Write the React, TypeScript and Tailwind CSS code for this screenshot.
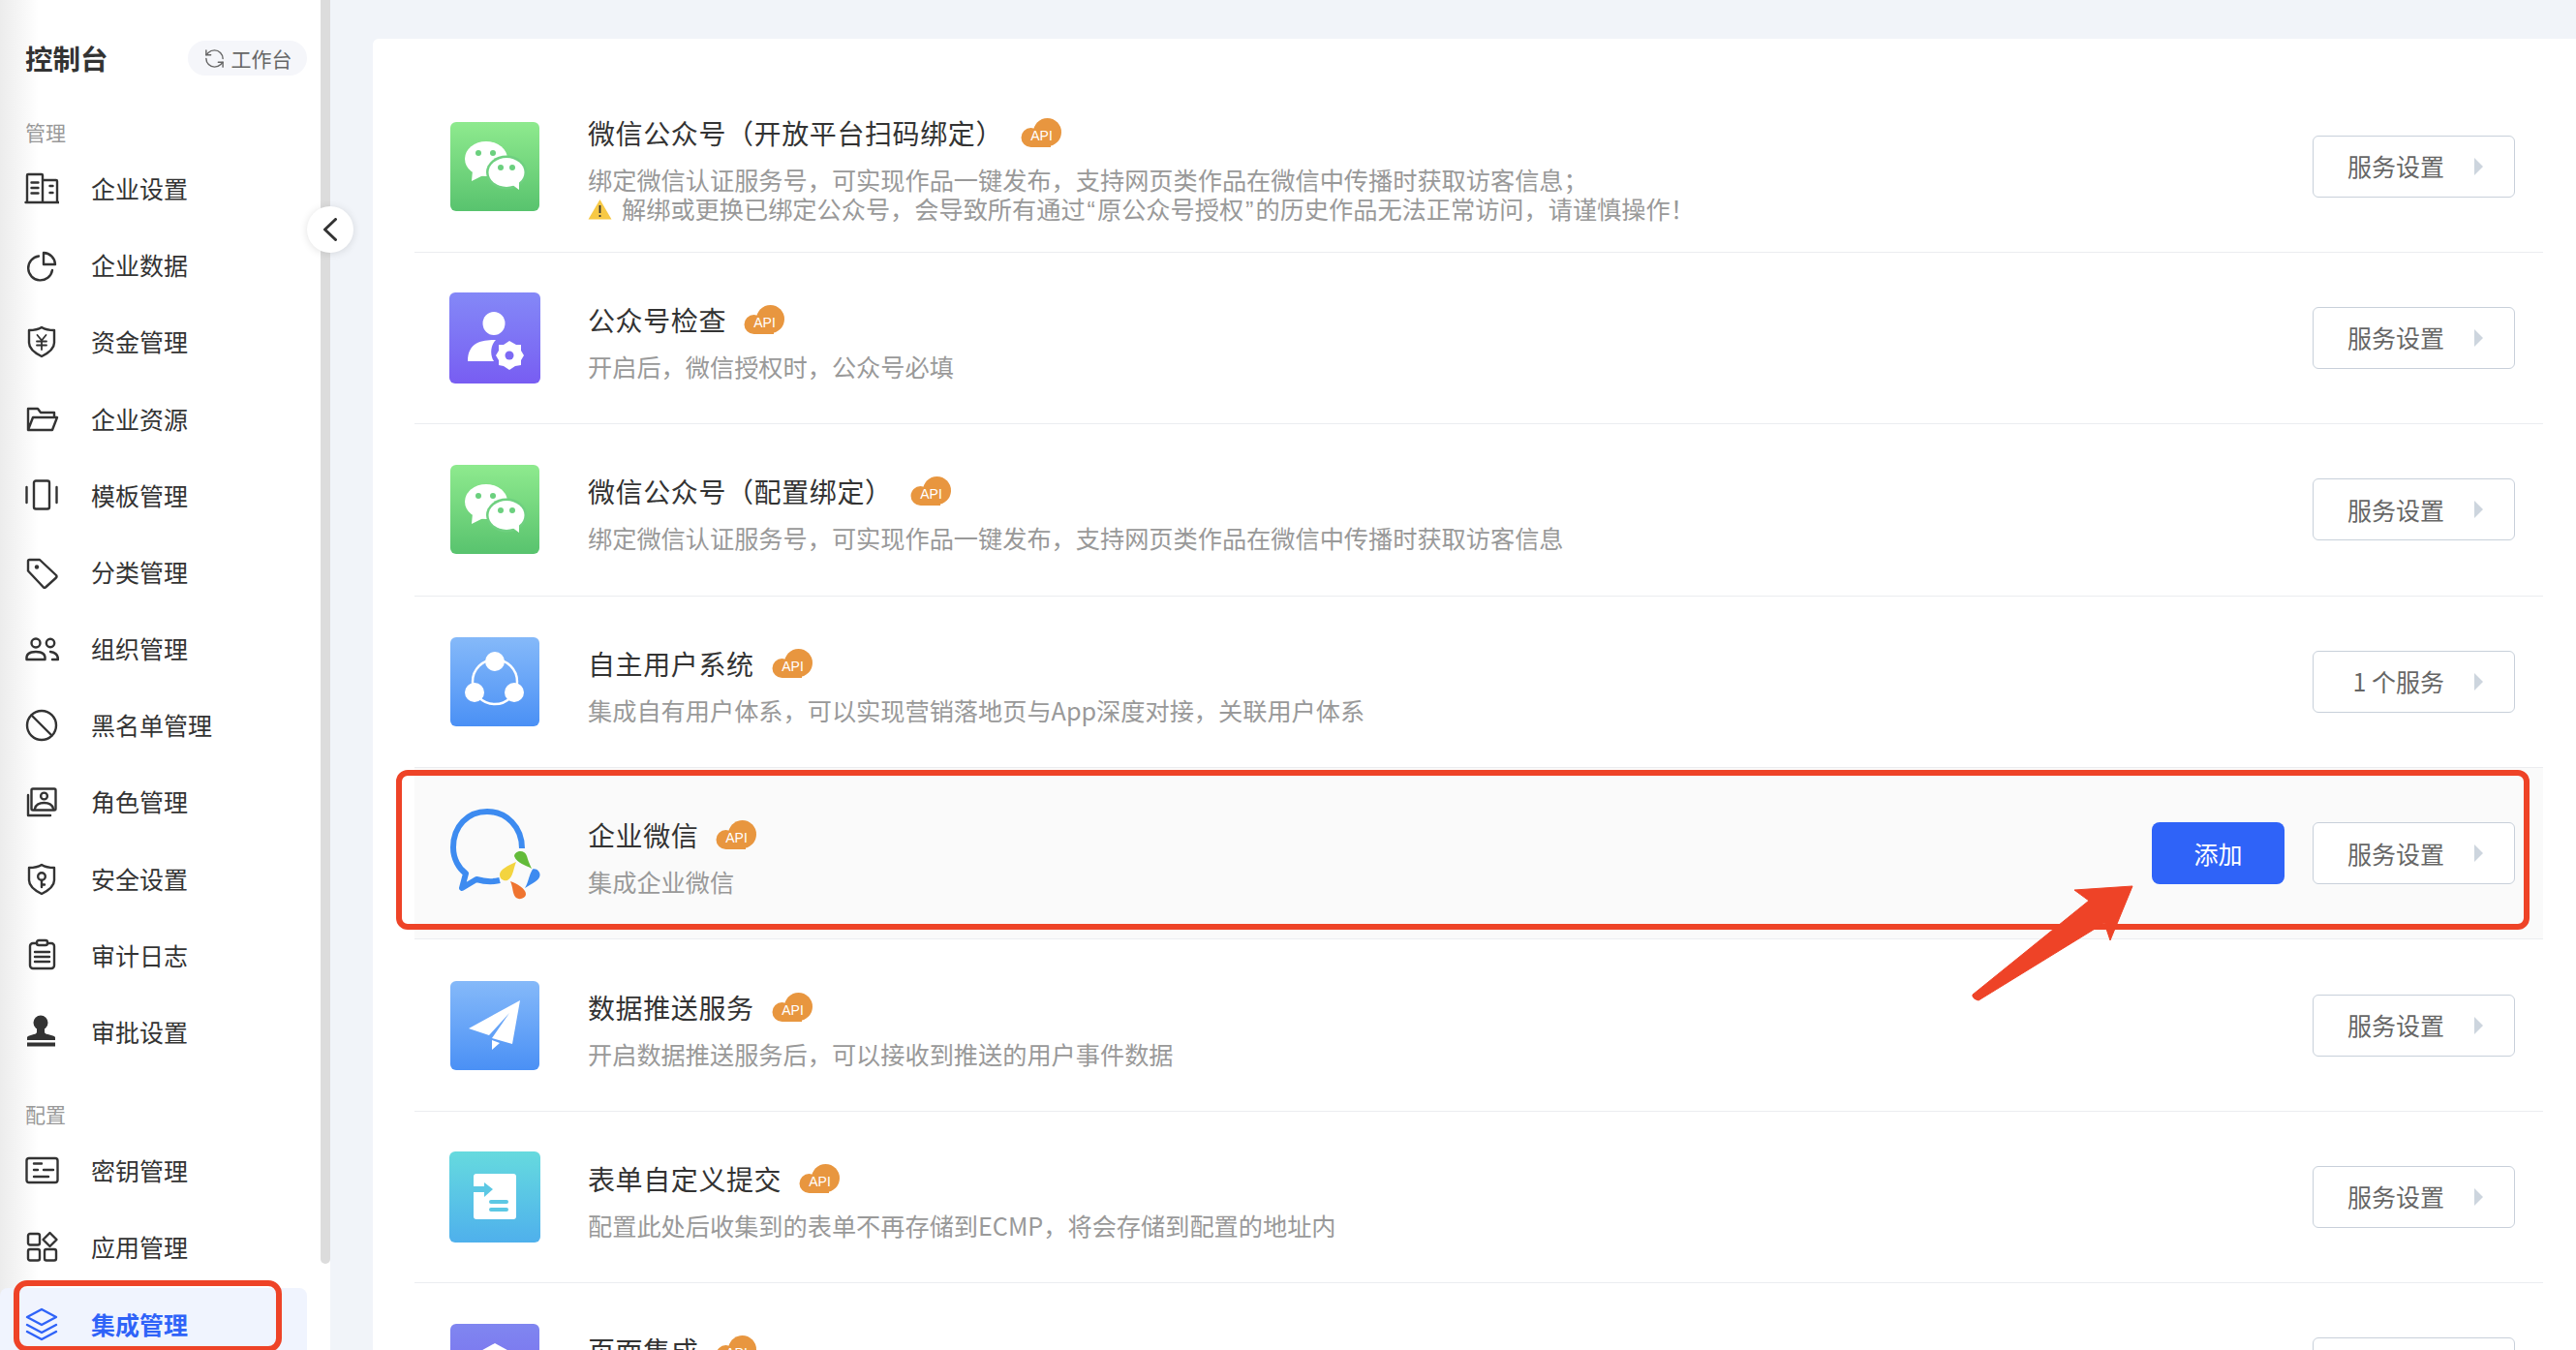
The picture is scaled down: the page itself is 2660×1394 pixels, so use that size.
import type { ReactNode } from 'react';
import { RefreshCcw } from 'lucide-react';

function NavIcon({ children, active }: { children: ReactNode; active?: boolean }) {
  return (
    <svg
      viewBox="0 0 36 36"
      fill="none"
      stroke="currentColor"
      strokeWidth={2.4}
      strokeLinecap="round"
      strokeLinejoin="round"
      className={`w-[36px] h-[36px] shrink-0 ${active ? 'text-[#2f63f8]' : 'text-[#333333]'}`}
    >
      {children}
    </svg>
  );
}

const shield = 'M18 4 C22 6.5 27 7 31 7 V20 C31 27 24 31 18 34 C12 31 5 27 5 20 V7 C9 7 14 6.5 18 4 Z';

const mainNav: { label: string; icon: ReactNode }[] = [
  {
    label: '企业设置',
    icon: (
      <>
        <path d="M1.5 33 H35.5 M3 33 V5 Q3 4 4 4 H18 Q19 4 19 5 V33 M19 10 H33 Q34 10 34 11 V33" />
        <path d="M7.5 12.5 H14.5 M7.5 18 H14.5 M7.5 23.5 H14.5 M26.5 16 H29.5 M26.5 23 H29.5" />
      </>
    ),
  },
  {
    label: '企业数据',
    icon: (
      <>
        <path d="M15 9.5 A12.5 12.5 0 1 0 29 24" />
        <path d="M20 6 A12.5 12.5 0 0 1 32 18 H20 Z" />
      </>
    ),
  },
  {
    label: '资金管理',
    icon: (
      <>
        <path d={shield} />
        <path d="M13.5 12 L18 17.5 L22.5 12 M13 18.5 H23 M13 22.5 H23 M18 17.5 V27" strokeWidth={1.8} />
      </>
    ),
  },
  {
    label: '企业资源',
    icon: <path d="M4 30 V8 H14 L17 12 H31 V17 M4 30 H29 L34 17 H9 L4 30 Z" />,
  },
  {
    label: '模板管理',
    icon: (
      <>
        <rect x="10" y="3.5" width="16" height="29" rx="2" />
        <path d="M2.5 10 V26 M33.5 10 V26" />
      </>
    ),
  },
  {
    label: '分类管理',
    icon: (
      <>
        <path d="M4 7.5 Q4 6 5.5 6 H16 L33 22 Q34 23.5 33 24.5 L22 34.5 Q20.5 35.5 19.5 34 L4 17.5 Z" />
        <circle cx="13" cy="13.5" r="2.2" fill="currentColor" stroke="none" />
      </>
    ),
  },
  {
    label: '组织管理',
    icon: (
      <>
        <circle cx="12" cy="13" r="4.5" />
        <path d="M2.5 30 Q1.5 22 12 22 Q22.5 22 21.5 30 Z" />
        <circle cx="27" cy="13" r="4.2" />
        <path d="M27 22 Q35 23 35 30 H29" />
      </>
    ),
  },
  {
    label: '黑名单管理',
    icon: (
      <>
        <circle cx="18" cy="19" r="15" />
        <path d="M7.5 8.5 L28.5 29.5" />
      </>
    ),
  },
  {
    label: '角色管理',
    icon: (
      <>
        <rect x="7.5" y="5.5" width="25" height="22" rx="1.5" />
        <circle cx="20.5" cy="13" r="3.4" />
        <path d="M11 26 Q12.5 20 20.5 20 Q28.5 20 30 26" />
        <path d="M4 12 V33 H27" />
      </>
    ),
  },
  {
    label: '安全设置',
    icon: (
      <>
        <path d={shield} />
        <circle cx="18" cy="16" r="3.8" />
        <path d="M18 20 V27 M18 24.5 H21" />
      </>
    ),
  },
  {
    label: '审计日志',
    icon: (
      <>
        <rect x="6" y="6" width="25" height="26" rx="3" />
        <rect x="13" y="3" width="11" height="5" rx="2" fill="#ffffff" />
        <path d="M11 15 H26 M11 20 H26 M11 25 H26" />
      </>
    ),
  },
  {
    label: '审批设置',
    icon: (
      <>
        <circle cx="17" cy="9" r="7.5" fill="currentColor" stroke="none" />
        <path
          d="M13 14 H21 V19 C22 22 30 21 32 24 V27 H3 V24 C5 21 12 22 13 19 Z"
          fill="currentColor"
          stroke="none"
        />
        <rect x="3" y="29.5" width="29" height="4" fill="currentColor" stroke="none" />
      </>
    ),
  },
];

const configNav: { label: string; icon: ReactNode }[] = [
  {
    label: '密钥管理',
    icon: (
      <>
        <rect x="2.5" y="6" width="32" height="25" rx="2.5" />
        <path d="M10 11.5 H18 M20 18 H30 M10 25 H25 M10 18 H14" />
      </>
    ),
  },
  {
    label: '应用管理',
    icon: (
      <>
        <rect x="4" y="5" width="12" height="11.5" rx="2" />
        <rect x="4" y="21" width="12" height="11.5" rx="2" />
        <rect x="21" y="21" width="12" height="11.5" rx="2" />
        <path d="M26.5 4 L33.5 11 L26.5 18 L19.5 11 Z" />
      </>
    ),
  },
];

function NavRow({ label, icon }: { label: string; icon: ReactNode }) {
  return (
    <div className="h-[79.2px] flex items-center gap-[33px] pl-[25px]">
      <NavIcon>{icon}</NavIcon>
      <span className="text-[25px] leading-[34px] text-[#333333]">{label}</span>
    </div>
  );
}

function ApiBadge() {
  return (
    <svg viewBox="0 0 42 30" className="w-[42px] h-[30px] shrink-0">
      <circle cx="27.5" cy="14.5" r="14.5" fill="#e8963f" />
      <circle cx="10.5" cy="20" r="10" fill="#e8963f" />
      <rect x="11" y="18" width="20" height="12" fill="#e8963f" />
      <text
        x="21.5"
        y="22.5"
        textAnchor="middle"
        fontSize="14"
        fontFamily="'Liberation Sans', sans-serif"
        fill="#ffffff"
      >
        API
      </text>
    </svg>
  );
}

function WechatLogo() {
  return (
    <div className="w-[92px] h-[92px] rounded-[6px] bg-gradient-to-b from-[#8eea8e] to-[#58c36e] flex items-center justify-center">
      <svg viewBox="0 0 92 92" className="w-[92px] h-[92px]">
        <ellipse cx="37" cy="38" rx="22" ry="18" fill="#ffffff" />
        <path d="M23 50 L22 61 L36 54 Z" fill="#ffffff" />
        <circle cx="29" cy="32" r="3" fill="#6bd07e" />
        <circle cx="44" cy="32" r="3" fill="#6bd07e" />
        <ellipse cx="58" cy="52" rx="21" ry="17.5" fill="#6fd080" />
        <ellipse cx="58" cy="52" rx="18.5" ry="15" fill="#ffffff" />
        <path d="M63 64 L71 70 L71 60 Z" fill="#ffffff" />
        <circle cx="52" cy="47" r="3" fill="#6bd07e" />
        <circle cx="64" cy="47" r="3" fill="#6bd07e" />
      </svg>
    </div>
  );
}

function UserGearLogo() {
  return (
    <div className="w-[94px] h-[94px] rounded-[6px] bg-gradient-to-b from-[#8488f7] to-[#785df2]">
      <svg viewBox="0 0 94 94" className="w-[94px] h-[94px]">
        <ellipse cx="46" cy="32" rx="11.5" ry="12" fill="#ffffff" />
        <path d="M48 49 C36 49 19 50 19 71 H46 C42 65 42 55 48 49 Z" fill="#ffffff" />
        <path
          d="M62 50 L69 54 H74 L74 60 L77 65 L74 70 V75 L68 76 L62 80 L56 76 L51 75 V70 L48 65 L51 60 V54 L56 54 Z"
          fill="#ffffff"
        />
        <circle cx="62" cy="65" r="4.5" fill="#7c69f4" />
      </svg>
    </div>
  );
}

function ShareLogo() {
  return (
    <div className="w-[92px] h-[92px] rounded-[6px] bg-gradient-to-b from-[#85b9f9] to-[#4a90f5]">
      <svg viewBox="0 0 92 92" className="w-[92px] h-[92px]">
        <circle cx="46" cy="46" r="23" fill="none" stroke="#ffffff" strokeWidth="2.5" />
        <circle cx="46" cy="25" r="10" fill="#ffffff" />
        <circle cx="25" cy="57" r="10" fill="#ffffff" />
        <circle cx="66" cy="57" r="10" fill="#ffffff" />
      </svg>
    </div>
  );
}

function WecomLogo() {
  return (
    <svg viewBox="0 0 94 95" className="w-[94px] h-[95px]">
      <path
        d="M75 42 C75 20 59 4 39 4 C19 4 4 19 4 41 C4 53 10 63 17 68 L13 83 L28 74 C35 76 44 77 52 75"
        fill="none"
        stroke="#3d8bf0"
        strokeWidth="6"
        strokeLinejoin="round"
      />
      <path d="M67 50 C68 44 78 43 80 50 C81 53 81 54 85 63 C79 59 70 58 67 50 Z" fill="#63bb39" />
      <path d="M52 69 C52 64 60 60 69 56 C66 63 66 72 60 75 C56 76 52 74 52 69 Z" fill="#f3d43f" />
      <path d="M63 76 C70 78 79 84 79 89 C79 94 71 96 68 92 C65 88 66 83 63 76 Z" fill="#ef7430" />
      <path d="M78 83 C82 76 82 70 86 63.5 C90 62 94 66 93.5 70 C93 75 86 78 78 83 Z" fill="#3d8bf0" />
    </svg>
  );
}

function PlaneLogo() {
  return (
    <div className="w-[92px] h-[92px] rounded-[6px] bg-gradient-to-b from-[#85b9f9] to-[#4a90f5]">
      <svg viewBox="0 0 92 92" className="w-[92px] h-[92px]">
        <path d="M72 20 L19 49 L40 56 L61 33 L43 59 L64 65 Z" fill="#ffffff" strokeLinejoin="round" />
        <path d="M43 61 L43 71 L51 64 Z" fill="#ffffff" />
      </svg>
    </div>
  );
}

function FormLogo() {
  return (
    <div className="w-[94px] h-[94px] rounded-[6px] bg-gradient-to-b from-[#66dade] to-[#4fb0ec]">
      <svg viewBox="0 0 94 94" className="w-[94px] h-[94px]">
        <rect x="25" y="23" width="44" height="47" rx="3" fill="#ffffff" />
        <path d="M25 36 H36 V32 L45 39 L36 47 V42 H25 Z" fill="#5cc8e4" />
        <path d="M43 52 H59 M43 60 H59" stroke="#5cc8e4" strokeWidth="4" strokeLinecap="round" />
      </svg>
    </div>
  );
}

function PageLogo() {
  return (
    <div className="w-[92px] h-[92px] rounded-[6px] bg-gradient-to-b from-[#8086f0] to-[#7564ee]">
      <svg viewBox="0 0 92 92" className="w-[92px] h-[92px]">
        <path d="M46 20 L68 32 L46 44 L24 32 Z" fill="#ffffff" />
        <path d="M24 42 L46 54 L68 42 V62 H24 Z" fill="#ffffff" />
      </svg>
    </div>
  );
}

// the reference sets its curly quotes narrow, Noto's are full width
function Quote({ children }: { children: string }) {
  return <span className="mx-[2px] font-['Liberation_Sans']">{children}</span>;
}

const services: { title: string; desc: ReactNode; logo: ReactNode; action?: string; highlight?: boolean }[] = [
  {
    title: '微信公众号（开放平台扫码绑定）',
    logo: <WechatLogo />,
    desc: (
      <>
        <div>绑定微信认证服务号，可实现作品一键发布，支持网页类作品在微信中传播时获取访客信息；</div>
        <div className="flex items-center gap-[10px]">
          <svg viewBox="0 0 25 22" className="w-[25px] h-[22px] shrink-0">
            <path d="M12.5 1 L24.5 21.5 H0.5 Z" fill="#f7c945" />
            <path d="M12.5 7 V15 M12.5 17 V19" stroke="#333333" strokeWidth="1.8" />
          </svg>
          <span>
            解绑或更换已绑定公众号，会导致所有通过<Quote>“</Quote>原公众号授权<Quote>”</Quote>
            的历史作品无法正常访问，请谨慎操作！
          </span>
        </div>
      </>
    ),
  },
  { title: '公众号检查', logo: <UserGearLogo />, desc: '开启后，微信授权时，公众号必填' },
  {
    title: '微信公众号（配置绑定）',
    logo: <WechatLogo />,
    desc: '绑定微信认证服务号，可实现作品一键发布，支持网页类作品在微信中传播时获取访客信息',
  },
  {
    title: '自主用户系统',
    logo: <ShareLogo />,
    desc: '集成自有用户体系，可以实现营销落地页与App深度对接，关联用户体系',
    action: '1 个服务',
  },
  { title: '企业微信', logo: <WecomLogo />, desc: '集成企业微信', highlight: true },
  { title: '数据推送服务', logo: <PlaneLogo />, desc: '开启数据推送服务后，可以接收到推送的用户事件数据' },
  {
    title: '表单自定义提交',
    logo: <FormLogo />,
    desc: '配置此处后收集到的表单不再存储到ECMP，将会存储到配置的地址内',
  },
  { title: '页面集成', logo: <PageLogo />, desc: '页面集成' },
];

function ServiceRow({ title, desc, logo, action = '服务设置', highlight }: (typeof services)[number]) {
  return (
    <div
      className={`relative h-[177.4px] shrink-0 flex items-center pl-[36px] pr-[29px] border-b border-[#ebedf0] ${
        highlight ? 'bg-[#fafafa]' : ''
      }`}
    >
      <div className="w-[94px] flex justify-center shrink-0">{logo}</div>
      <div className="ml-[49px] pt-[5px] flex-1 min-w-0">
        <div className="flex items-center gap-[18px] h-[40px]">
          <span className="text-[28px] tracking-[0.6px] leading-[40px] text-[#333333]">{title}</span>
          <ApiBadge />
        </div>
        <div className="mt-[13px] text-[25.2px] leading-[30px] text-[#999999]">{desc}</div>
      </div>
      {highlight && (
        <button className="w-[137px] h-[64px] mr-[29px] rounded-[8px] bg-[#2f63f8] text-white text-[25px]">添加</button>
      )}
      <button className="w-[209px] h-[64px] rounded-[6px] bg-white border border-[#c8d0da] flex items-center pl-[35px] text-[25px] text-[#666666]">
        <span className="w-[100px] text-right whitespace-nowrap">{action}</span>
        <span className="ml-[31px] w-0 h-0 border-y-[9px] border-y-transparent border-l-[9px] border-l-[#cdd5de]" />
      </button>
      {highlight && (
        <div className="absolute -left-[19px] right-[14px] top-[2px] h-[165px] border-[6px] border-[#ee4327] rounded-[12px]" />
      )}
    </div>
  );
}

export default function App() {
  return (
    <div
      className="relative flex h-[1394px] w-[2660px] overflow-hidden bg-[#f1f4f9]"
      style={{ fontFamily: "'Noto Sans CJK SC', 'Noto Sans', sans-serif" }}
    >
      <aside className="flex w-[341px] shrink-0 bg-white">
        <div className="w-[331px] bg-[linear-gradient(90deg,#ececec_0,#ffffff_40px)]">
          <div className="h-[120px] flex items-center justify-between pl-[26px] pr-[14px]">
            <span className="text-[28.5px] font-bold leading-[40px] text-[#333333]">控制台</span>
            <div className="w-[123px] h-[36px] rounded-full bg-[#f5f6fa] flex items-center justify-center gap-[6px] text-[#666666]">
              <RefreshCcw size={23} strokeWidth={1.5} />
              <span className="text-[21px] leading-[30px]">工作台</span>
            </div>
          </div>
          <div className="h-[34.4px] pl-[26px] text-[21px] leading-[33px] text-[#999999]">管理</div>
          {mainNav.map((item) => (
            <NavRow key={item.label} {...item} />
          ))}
          <div className="h-[63.6px] pt-[29px] pl-[26px] text-[21px] leading-[33px] text-[#999999]">配置</div>
          {configNav.map((item) => (
            <NavRow key={item.label} {...item} />
          ))}
          <div className="relative h-[79.2px] pt-[3px]">
            <div className="h-[74px] mr-[14px] rounded-[8px] bg-[#f0f4fe] flex items-center gap-[33px] pl-[25px]">
              <NavIcon active>
                <path d="M18 3 L33 11 L18 19 L3 11 Z" />
                <path d="M3 19 L18 27 L33 19" />
                <path d="M3 26 L18 34 L33 26" />
              </NavIcon>
              <span className="text-[25px] font-bold leading-[34px] text-[#2f63f8]">集成管理</span>
            </div>
            <div className="absolute left-[14px] -top-[5px] w-[277px] h-[74px] border-[6px] border-[#ee4327] rounded-[14px]" />
          </div>
        </div>
        <div className="w-[10px]">
          <div className="h-[1305px] rounded-b-[5px] bg-[#dcdcdc]" />
        </div>
      </aside>

      <main className="flex-1 min-w-0 pt-[40px] pl-[44px]">
        <div className="h-full rounded-tl-[6px] bg-white pt-[43.5px] pl-[43px] pr-[34px] flex flex-col overflow-visible">
          {services.map((service) => (
            <ServiceRow key={service.title} {...service} />
          ))}
        </div>
      </main>

      <button className="absolute left-[317px] top-[213px] w-[48px] h-[48px] rounded-full bg-white shadow-[0_1px_8px_rgba(0,0,0,0.12)] flex items-center justify-center">
        <svg viewBox="0 0 24 24" className="w-[24px] h-[24px]" fill="none" stroke="#333333" strokeWidth="3" strokeLinecap="round" strokeLinejoin="round">
          <path d="M17.5 1.5 L6.5 12 L17.5 22.5" />
        </svg>
      </button>

      <svg viewBox="0 0 170 125" className="absolute left-[2035px] top-[912px] w-[170px] h-[125px]">
        <path
          d="M167 3 L107 7 L122 18 L2 115 Q1 119 8 121 L138 41 L144 59 Z"
          fill="#ee4327"
          stroke="#ee4327"
          strokeWidth="1"
          strokeLinejoin="round"
        />
      </svg>
    </div>
  );
}
